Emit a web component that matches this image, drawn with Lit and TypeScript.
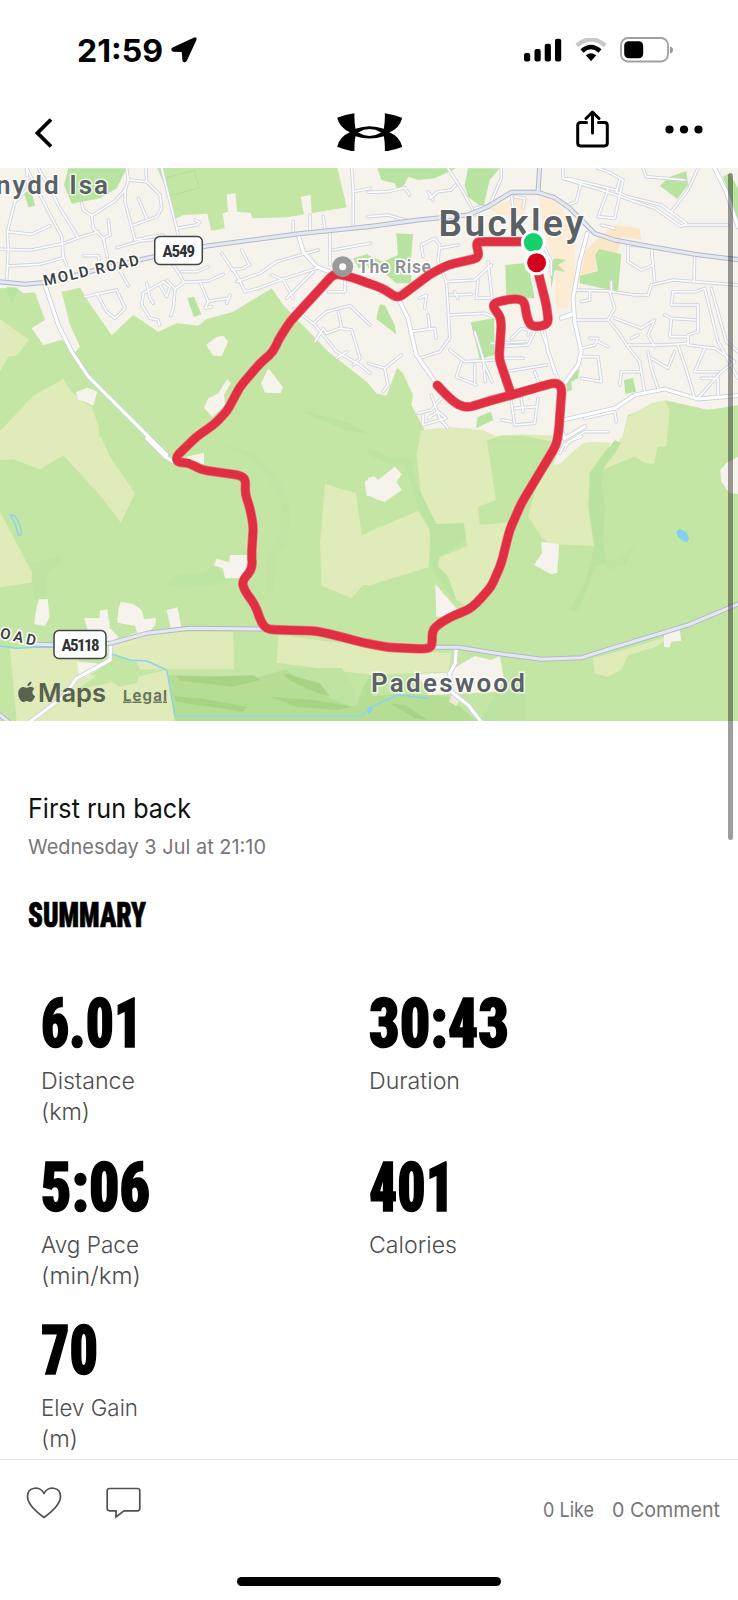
import { LitElement, html, svg, css } from "lit";
import { customElement } from "lit/decorators.js";

type Shape = [string, string];
type Tile = { x: number; y: number; areas: Shape[]; minor: string[]; mid: string[]; major: string[]; water: string[] };

const GREEN = "#c4e6a5";
const PARK = "#b9e3a0";
const FIELD = "#dfebb9";
const TOWN = "#f5f3ec";
const SHOP = "#fbe6c6";

// The map is drawn as four tiles, each in units of a third of a pixel.
const NW: Tile = {
  x: 0, y: 165,
  areas: [
    [TOWN, "0,0 1115,0 1115,662 985,560 850,420 815,370 700,440 620,462 595,482 530,475 475,500 400,450 335,511 300,460 265,410 240,368 185,380 210,480 240,545 225,562 185,525 130,540 95,490 135,465 105,382 70,385 50,368 0,370"],
    [GREEN, "468,0 1010,0 1040,127 860,157 757,160 752,143 712,140 706,85 680,88 684,140 668,145 674,190 634,197 622,146 550,150 525,162 505,90"],
    [TOWN, "902,95 932,90 935,150 912,150"],
    [PARK, "205,10 380,10 350,70 300,100 215,116 192,60"],
    [PARK, "68,75 95,80 105,122 86,127"],
    [PARK, "562,400 582,395 604,448 582,456"],
    [PARK, "20,366 52,368 48,395 38,412 25,395"],
    [PARK, "1060,280 1110,265 1110,300 1075,310"],
    [FIELD, "0,462 88,525 50,572 25,575 0,620"],
    [FIELD, "0,798 100,692 190,642 215,680 250,710 275,725 295,780 300,845 0,845"],
    [TOWN, "618,540 650,515 670,512 684,530 665,574 640,572"],
    [TOWN, "805,610 848,665 842,685 795,683 783,655"],
    [TOWN, "682,642 692,655 672,690 676,720 636,756 612,728 625,700 655,685"],
    [TOWN, "228,682 262,668 292,680 280,722 255,710 235,705"],
    ["#bce2a0", "915,738 1050,775 1110,810 1030,792 960,765"],
  ],
  minor: [
    "20,345 25,250 22,200 45,110 85,70 80,10", "22,200 95,208 150,182", "0,253 95,255 192,235 235,218 295,200", "25,303 120,298 190,278",
    "80,10 130,110 185,215 190,275 200,300", "115,10 150,70 180,130 235,218", "245,115 250,135 275,152 345,108 375,75 385,45 380,10",
    "275,152 280,190 310,220 325,290 350,300 385,362", "385,45 440,50 438,10", "440,50 480,90 485,130 470,155 395,182", "375,75 375,110 405,225 455,215 490,210",
    "415,100 440,160", "310,220 330,210 325,165", "350,248 420,228 480,222", "250,272 295,272 300,310", "485,10 530,190 535,215", "530,190 590,180 600,172 585,165", "520,300 540,330 552,352 625,348 670,328", "500,345 525,372 552,352", "525,372 520,430 512,452",
    "430,385 490,350 510,365 500,395 480,360", "430,385 425,420 450,460 475,465 478,480", "440,355 450,400 460,415", "600,350 625,410 615,430 635,425", "625,410 650,405 685,400 680,415 690,390",
    "545,320 590,320 625,305", "255,395 350,375 375,430 345,460 320,440 290,385", "665,265 695,310 710,330 735,380 775,370 850,342 950,310", "725,255 745,295", "695,315 730,310 750,298", "710,350 780,325 830,290 900,270 955,255",
    "880,205 880,170", "930,200 930,150", "975,195 970,155", "1060,185 1060,80 1055,10", "1060,80 1110,70", "1000,255 1110,235", "990,200 990,300", "880,400 850,345 815,330", "940,320 860,400", "985,380 1035,380 1035,340",
    "880,430 945,480 1010,560 1080,600 1110,625", "940,475 980,440 1050,422 1110,480", "980,505 1020,490 1055,495 1080,580 1060,600", "1025,490 1015,440", "980,505 970,490 945,530", "1040,560 1010,580",
  ],
  mid: ["135,360 175,480 215,560 265,635 470,840 500,870", "895,210 910,260 950,305 1000,325"],
  major: ["-5,350 75,358 140,352 300,312 440,280 620,243 890,207 1115,184"],
  water: [],
};

const NE: Tile = {
  x: 368, y: 165,
  areas: [
    [TOWN, "0,0 1115,0 1115,722 1020,735 895,707 780,750 760,830 0,830 0,655"],
    [GREEN, "0,655 25,685 55,692 88,608 105,625 135,690 130,720 170,795 160,845 0,845"],
    [FIELD, "160,795 250,787 345,795 380,812 460,808 555,812 580,845 150,845"],
    [GREEN, "345,830 400,812 470,812 555,830 555,845 345,845"],
    [TOWN, "585,760 770,700 755,845 585,845"],
    [FIELD, "760,830 780,755 850,715 890,706 905,735 895,845 740,845"],
    [GREEN, "890,706 1020,735 1115,720 1115,845 895,845 908,735"],
    [PARK, "28,10 265,10 200,40 150,45 120,35 110,58 90,78 80,55 40,45"],
    [PARK, "300,10 395,10 365,45 345,130 300,95 290,60"],
    [PARK, "955,18 960,60 928,102 875,62 905,35"],
    ["#fbecd3", "510,95 555,100 590,140 620,200 620,320 600,430 565,430 560,300 530,200"],
    ["#fbecd3", "365,130 450,95 480,100 470,150 390,150"],
    [SHOP, "650,260 690,220 740,180 815,190 820,225 760,215 740,300 640,330"],
    [PARK, "693,252 760,268 750,380 635,355 635,332 690,318 682,270"],
    [PARK, "412,300 480,293 500,400 415,398"],
    [PARK, "560,280 595,285 570,300 592,320 560,315 550,370 545,300"],
    [PARK, "85,205 135,208 130,270 130,355 85,355 50,325 0,310 0,270 45,290 90,270"],
    [PARK, "35,418 50,420 80,480 85,508 25,462"],
    [PARK, "308,472 378,460 380,570 335,582"],
    [PARK, "328,757 368,740 376,765 325,790"],
    [PARK, "768,645 795,638 804,680 772,687"],
    [PARK, "595,650 635,610 630,640 610,650 612,675 596,680"],
    [PARK, "1065,35 1110,170 1110,70 1085,25"],
  ],
  minor: [
    "0,82 60,80 110,68 125,90", "240,10 285,80 310,125 320,150", "185,100 210,80 250,75 262,60", "180,80 195,105", "320,130 365,120 400,40 400,10", "440,95 470,100 465,130", "430,85 435,130",
    "585,10 585,40 700,75 860,130 940,185 955,175 880,120 780,95 745,80 755,45", "600,40 745,75", "690,10 720,20 765,45 740,160 690,155 720,75", "825,10 835,35 950,45", "990,10 960,75 910,140", "950,180 1080,180", "640,50 625,110 600,120", "700,180 740,190",
    "165,275 160,240 200,220 215,240 210,290 235,350", "215,250 270,240", "235,350 240,420 245,520 215,560 155,580", "235,350 320,345 370,300", "245,390 310,388", "240,450 350,445 385,460", "270,400 260,380", "330,345 325,400 370,398", "360,290 372,400",
    "155,400 175,390 170,430", "125,500 200,490 205,520", "185,490 180,450", "320,500 345,580 352,650", "245,555 290,590 380,585", "320,600 320,655", "280,590 265,635 325,660", "350,600 372,650", "400,545 480,540 500,500 460,490 430,520",
    "370,535 470,530", "400,580 465,580", "425,618 535,600", "480,510 490,480", "520,495 555,600 570,640", "530,500 540,560 560,625", "500,620 515,660",
    "0,595 50,610 60,660 45,680", "50,610 100,570", "150,745 190,735 220,700", "165,750 165,780 235,760 210,740 180,760", "190,690 215,760 240,790", "430,710 440,780 500,775 510,700", "400,765 430,770", "440,730 505,725", "460,700 465,740",
    "620,375 720,378 800,390 840,390 850,360 915,345 980,350 1110,360", "780,290 780,240 850,245 855,300 820,315 780,290", "850,245 860,350", "980,270 978,350", "1035,275 1110,280", "640,410 665,405 665,375", "730,380 730,350",
    "620,465 720,465 740,430 725,380", "720,465 750,500 780,545 815,590", "740,460 820,490 860,465 840,510 860,545", "780,540 890,540 960,535", "640,550 680,540 690,520 665,520", "690,530 720,545", "790,520 810,510",
    "640,575 690,575 700,650 640,640", "915,380 910,420 950,420 990,420 990,500 960,510 960,540", "890,450 910,460 985,465", "910,465 905,515 960,515", "915,380 985,380 1010,370 1050,530 1110,640", "960,540 1040,550 1100,590 1060,620 990,700",
    "930,540 960,630 980,700", "1010,550 980,620 1050,620", "815,590 820,620 760,620 755,660", "820,620 830,680", "840,560 850,610 870,670", "920,560 900,610 850,580", "1030,370 1075,530 1110,560", "580,455 610,445", "590,840 650,800 720,800", "650,760 740,740 745,770", "1050,690 1050,640 1000,640",
    "0,155 60,150 130,170", "530,250 550,290 550,330",
  ],
  mid: [
    "90,398 120,460 145,570 205,655", "658,205 635,290 615,400 620,470 640,560 630,600 590,655", "585,765 740,730 800,690 890,672 990,702 1110,692", "1040,10 1075,80 1110,185", "610,450 580,460",
  ],
  major: ["-5,186 150,165 300,150 360,125 430,82 510,82 560,98 605,130 640,165 680,205 740,225 850,245 980,268 1115,285", "515,0 510,82"],
  water: [],
};

const SW: Tile = {
  x: 0, y: 440,
  areas: [
    [FIELD, "0,-10 303,-10 330,50 405,160 362,248 330,205 290,155 190,46 120,88 40,58 0,60"],
    [FIELD, "0,215 95,395 95,428 0,442"],
    [FIELD, "975,132 1068,160 1085,285 1115,275 1115,435 1090,435 1055,475 965,437 960,310"],
    ["#bfe4a4", "660,10 760,40 830,100 870,190 865,300 830,350 820,460 800,460 800,350 840,280 845,190 800,110 740,50"],
    ["#bee4a4", "495,430 530,405 600,400 640,378 700,420 640,435 560,445 510,440"],
    ["#bee4a4", "95,370 175,345 180,370 142,395 140,480 100,480"],
    [FIELD, "30,625 330,610 410,575 700,575 702,688 420,688 410,725 350,740 300,700 230,750 500,690 525,845 50,845"],
    [GREEN, "230,640 320,640 410,665 420,690 410,730 360,740 300,705 250,705"],
    [FIELD, "835,585 1115,620 1115,705 830,668"],
    ["#b5dd94", "505,705 780,710 850,690 1020,685 1060,750 1070,790 1090,740 1115,700 1115,845 525,845"],
    ["#bfe3a0", "850,685 1025,685 1060,740 1075,795 1050,800 980,770"],
    ["#a9d384", "530,708 640,710 760,705 780,720 700,740 540,722"],
    ["#a9d384", "520,768 600,775 740,800 730,815 530,785"],
    ["#a9d384", "850,700 960,730 990,770 950,758 870,722"],
    ["#a9d384", "810,770 940,780 1060,800 1010,810 890,800"],
    [TOWN, "117,478 143,478 149,530 135,558 103,552 108,510"],
    [TOWN, "252,534 298,534 300,512 322,508 330,565 355,590 330,620 265,575"],
    [TOWN, "362,485 400,492 425,510 432,538 468,534 466,555 448,575 412,580 405,558 352,548 355,510"],
    [TOWN, "500,510 533,502 543,560 512,564"],
    [TOWN, "690,345 745,345 745,415 675,415 668,385 641,376 650,356 688,367"],
    [TOWN, "232,665 290,670 300,685 260,710 235,700"],
    [TOWN, "560,50 612,38 612,72 580,75"],
    [TOWN, "1094,125 1115,110 1115,168 1100,168"],
  ],
  minor: [],
  mid: ["440,-5 495,50 525,68", "332,620 330,660 230,715 190,770 90,845"],
  major: ["90,612 160,614 330,610 440,580 570,565 800,567 830,570", "0,825 25,845"],
  water: ["0,618 50,625 100,622 160,622", "330,640 390,660 440,663 500,690 525,828 1085,828 1115,800", "30,225 45,250 55,285 65,285 60,255 45,228 30,225"],
};

const SE: Tile = {
  x: 368, y: 440,
  areas: [
    [FIELD, "160,-10 355,-10 384,180 330,200 335,255 425,247 415,330 360,450 300,500 265,480 240,410 210,380 215,352 297,318 288,250 205,252 160,170 145,40"],
    [FIELD, "0,277 150,213 187,270 182,382 0,437"],
    [FIELD, "560,60 640,10 740,-5 670,90 660,200 678,318 545,312 520,290 480,230 510,120"],
    [TOWN, "555,75 585,-5 740,-5 735,8 650,5 605,45 575,72"],
    [FIELD, "755,-5 875,-5 858,72 830,68 800,50 705,88 745,35"],
    ["#bce2a2", "740,0 760,10 710,75 700,130 712,200 705,300 715,370 680,380 660,440 630,510 605,510 650,430 680,320 662,200 665,100"],
    ["#bee3a3", "705,370 760,350 805,315 770,375 720,390"],
    ["#bce3a2", "0,20 60,50 130,60 140,120 205,252 285,250 295,300 210,350 210,380 240,410 265,480 240,460 190,380 185,270 150,200 130,130 110,75 60,70 0,45"],
    [TOWN, "80,80 102,103 85,125 102,150 50,186 25,178 0,165 0,115 18,108 30,120"],
    [TOWN, "520,305 573,312 568,398 550,403 498,375 522,340"],
    [TOWN, "202,432 268,508 235,530 205,530"],
    [TOWN, "1110,50 1075,70 1057,90 1060,125 1085,160 1115,162"],
    [FIELD, "0,625 250,640 240,695 0,705"],
    [FIELD, "675,655 800,620 930,580 860,622 780,645 760,690 720,710 680,700"],
    [TOWN, "888,580 935,570 940,602 910,605 905,622 888,622"],
    [TOWN, "265,680 320,648 370,660 395,648 408,715 390,755 180,765 150,702 240,698"],
    ["#b5dd94", "0,770 100,760 240,770 330,845 0,845"],
    ["#bde3a3", "380,760 470,740 475,845 340,845"],
    ["#a9d384", "65,790 110,795 180,840 140,835"],
    ["#f0ead8", "250,765 278,778 265,797 243,785"],
    ["#82d0f6", "925,275 935,267 955,275 963,295 958,307 945,303 930,290"],
    ["#82d0f6", "0,800 15,805 5,820 0,822"],
  ],
  minor: ["590,30 600,5 640,-10", "575,40 590,10"],
  mid: ["265,625 262,670 245,700 250,755 300,795 340,845", "580,-30 590,-5 650,-40"],
  major: ["200,622 270,622 400,642 520,658 640,653 740,622 960,555 1115,490"],
  water: ["0,805 90,765 180,775"],
};

const tiles = [NW, NE, SW, SE];

const locate = (t: Tile, points: string) =>
  points.split(" ").map((p) => {
    const [x, y] = p.split(",").map(Number);
    return [t.x + x / 3, t.y + y / 3];
  });

const place = (t: Tile, points: string) => locate(t, points).map(([x, y]) => `${x.toFixed(1)},${y.toFixed(1)}`).join(" ");

/** Path through the points with every corner eased over a few pixels. */
const eased = (pts: number[][], reach = 6) => {
  const toward = (a: number[], b: number[]) => {
    const d = Math.hypot(b[0] - a[0], b[1] - a[1]) || 1;
    const k = Math.min(reach, d / 2) / d;
    return `${(a[0] + (b[0] - a[0]) * k).toFixed(1)} ${(a[1] + (b[1] - a[1]) * k).toFixed(1)}`;
  };
  let d = `M${pts[0].join(" ")}`;
  for (let i = 1; i < pts.length - 1; i++) {
    d += `L${toward(pts[i], pts[i - 1])}Q${pts[i].join(" ")} ${toward(pts[i], pts[i + 1])}`;
  }
  return d + `L${pts[pts.length - 1].join(" ")}`;
};

const route = eased([
  ...locate(NE, "495,230 340,230 324,232 334,278 240,300 190,325 90,400 40,368"),
  ...locate(NW, "1105,355 1060,338 1003,325 870,470 835,525 820,560 780,595 720,665 680,740 640,780 590,815"),
  ...locate(SW, "528,50 533,68 565,68 605,90 720,106 737,118 735,160 750,205 760,260 755,340 757,385 726,425 733,450 765,495 785,550 800,566 820,569 950,573 1010,587 1090,608"),
  ...locate(SE, "60,622 165,627 192,622 193,570 215,550 260,525 300,510 325,490 370,440 400,370 425,270 460,190 520,90 565,15"),
  ...locate(NE, "572,800 582,668 565,652 520,664 430,690 350,712 300,728 270,720 240,695 208,661"),
]);
const spur = eased(locate(NE, "430,690 393,580 400,480 396,452 374,425 382,412 430,402 455,402 470,412 476,455 488,484 520,484 542,474 535,420 510,320"));

const tiled = (key: "minor" | "mid" | "major" | "water", cls: string) =>
  tiles.map((t) => t[key].map((p) => svg`<polyline class=${cls} points=${place(t, p)} />`));

/** Text set to an exact advance width, on a given baseline. */
const fit = (text: string, cls: string, width: number, height: number, baseline: number) => html`
  <svg class="line" width=${width} height=${height}>
    <text class=${cls} x="0" y=${baseline} textLength=${width} lengthAdjust="spacingAndGlyphs">${text}</text>
  </svg>`;

const label = (text: string, cls: string, x: number, y: number, width: number, turn = 0) => svg`
  <text class=${cls} x=${x} y=${y} textLength=${width} lengthAdjust="spacing"
    transform=${`rotate(${turn} ${x} ${y})`}>${text}</text>`;

@customElement("route-map")
export class RouteMap extends LitElement {
  static styles = css`
    :host { display: block; height: 553px; }
    svg { display: block; }
    text { font-family: Inter, "Liberation Sans", sans-serif; }
    polyline, .route, .route-edge { fill: none; stroke-linecap: round; stroke-linejoin: round; }
    .minor-edge { stroke: #d0d3dd; stroke-width: 3.4; }
    .minor-road { stroke: #fdfdfd; stroke-width: 1.7; }
    .mid-edge { stroke: #cbcfdb; stroke-width: 4.8; }
    .mid-road { stroke: #ffffff; stroke-width: 3.2; }
    .major-edge { stroke: #b3b8cb; stroke-width: 5; }
    .major-road { stroke: #e3e8f1; stroke-width: 3; }
    .water { stroke: #8bd3ec; stroke-width: 1.4; }
    .route-edge { stroke: #e8717d; stroke-width: 9.6; }
    .route { stroke: #e02f40; stroke-width: 8.2; }
    .town { fill: #5b6065; font-weight: 600; paint-order: stroke; stroke: rgba(255, 255, 255, 0.75); stroke-width: 3px; }
    .city { font-family: Roboto, sans-serif; font-size: 37px; font-weight: 600; }
    .village { font-family: Roboto, sans-serif; font-size: 26px; }
    .road { font-family: Roboto, sans-serif; fill: #3d3f42; font-size: 15px; font-weight: 600; paint-order: stroke; stroke: #fff; stroke-width: 3px; }
    .stop { font-family: Roboto, sans-serif; fill: #8c8f96; font-size: 17.5px; font-weight: 600; paint-order: stroke; stroke: #fff; stroke-width: 3px; }
    .shield { fill: #fff; stroke: #414344; stroke-width: 1.5; }
    .number { font-family: Roboto, sans-serif; font-stretch: 75%; font-size: 17px; font-weight: 700; fill: #303236; }
    .brand { fill: #596150; font-size: 25.5px; font-weight: 600; }
    .legal { fill: #6b7660; font-size: 15px; font-weight: 700; text-decoration: underline; text-underline-offset: 2px; }
  `;
  render() {
    return html`
      <svg width="738" height="553" viewBox="0 168 738 553">
        <rect x="0" y="168" width="738" height="553" fill="#c4e6a5" />
        ${tiles.map((t) => t.areas.map(([fill, p]) => svg`<polygon fill=${fill} points=${place(t, p)} />`))}
        <path d="M166 178l28-8 5 18-30 8z" fill="none" stroke="#b5dd98" stroke-width="1" />
        ${tiled("water", "water")}
        ${tiled("minor", "minor-edge")}${tiled("mid", "mid-edge")}
        ${tiled("minor", "minor-road")}${tiled("mid", "mid-road")}
        ${tiled("major", "major-edge")}${tiled("major", "major-road")}
        ${label("nydd Isa", "town village", -4, 193.5, 112)}
        ${label("MOLD ROAD", "road", 44.5, 286, 97.5, -12.5)}
        ${label("ROAD", "road", -13, 635, 49, 13)}
        ${label("The Rise", "stop", 358, 273.3, 73)}
        ${label("Padeswood", "town village", 371, 691.7, 154)}
        ${label("Buckley", "town city", 438.5, 236, 145)}
        <path class="route-edge" d=${route} /><path class="route-edge" d=${spur} />
        <path class="route" d=${route} /><path class="route" d=${spur} />
        <circle cx="342.7" cy="266.7" r="7" fill="#fff" stroke="#9a9a9b" stroke-width="7" />
        <circle cx="533.3" cy="242.5" r="11" fill="#16cf6d" stroke="#fff" stroke-width="3" />
        <circle cx="536.6" cy="262.8" r="11" fill="#d3021c" stroke="#fff" stroke-width="3" />
        <rect class="shield" x="154.7" y="236.5" width="47.6" height="28" rx="5" />
        ${label("A549", "number", 162.5, 256.6, 32.5)}
        <rect class="shield" x="54" y="630.5" width="52" height="28" rx="5" />
        ${label("A5118", "number", 61.5, 650.6, 38)}
        <path fill="#596150" d="M31.5 681.5c.2 2.200-1.800 4.500-4 4.600-.3-2.200 1.800-4.400 4-4.600zM34.300 689.100c-2.800 1.800-2.300 5.900.8 7.100-1 2.700-2.700 5.700-4.700 5.700-1.400 0-1.900-.8-3.600-.8s-2.200.8-3.600.8c-2.400 0-5-4.800-5-8.500 0-3.900 2.500-6.500 5.300-6.500 1.400 0 2.400.9 3.500.9 1 0 2.200-1 4-1 1.300 0 2.500.8 3.300 2.300z" />
        ${label("Maps", "brand", 38, 701.7, 68)}
        ${label("Legal", "legal", 123, 700.5, 44)}
      </svg>`;
  }
}

type Stat = { value: string; width: number; lines: [string, number][] };

const stats: Stat[] = [
  { value: "6.01", width: 101, lines: [["Distance", 94], ["(km)", 49]] },
  { value: "30:43", width: 140, lines: [["Duration", 91]] },
  { value: "5:06", width: 109, lines: [["Avg Pace", 98], ["(min/km)", 100]] },
  { value: "401", width: 85, lines: [["Calories", 88]] },
  { value: "70", width: 57, lines: [["Elev Gain", 97], ["(m)", 37]] },
];

@customElement("app-root")
export class AppRoot extends LitElement {
  static styles = css`
    :host {
      display: flex; flex-direction: column; position: relative;
      width: 738px; height: 1600px; overflow: hidden; background: #fff;
      font-family: Inter, "Liberation Sans", sans-serif;
    }
    svg { display: block; flex: none; }
    .line { overflow: visible; }
    .status { display: flex; align-items: center; height: 99px; padding: 0 64px 0 77px; box-sizing: border-box; }
    .time { font-size: 31px; font-weight: 700; fill: #000; }
    .arrow { margin-left: 8px; margin-top: 1px; }
    .indicators { display: flex; align-items: center; gap: 13px; margin-left: auto; }
    .header { display: flex; align-items: center; height: 69px; padding: 0 35px; box-sizing: border-box; }
    .back { margin-bottom: 2px; }
    .logo { margin: 0 0 3px 283.5px; }
    .share { margin: 0 0 10px auto; }
    .more { margin: 0 0 8px 56px; }
    .body { flex: 1; min-height: 0; overflow: hidden; padding: 72px 0 0 28px; }
    .title { font-size: 27px; font-weight: 400; fill: #111; }
    .date { font-size: 20.5px; fill: #777; }
    .heading { display: block; margin-top: 41px; }
    .summary { font-family: Roboto, sans-serif; font-stretch: 75%; font-size: 34.5px; font-weight: 900; fill: #000; stroke: #000; stroke-width: 0.7px; }
    .stats { display: grid; grid-template-columns: 328px 328px; grid-auto-rows: 163.7px; padding: 60px 0 0 13px; }
    .value { font-family: Roboto, sans-serif; font-stretch: 75%; font-size: 68px; font-weight: 900; fill: #000; stroke: #000; stroke-width: 1.6px; }
    .captions { padding-top: 12px; }
    .caption { font-size: 23px; font-weight: 350; fill: #4d4d4d; }
    .footer { display: flex; height: 86px; border-top: 1.5px solid #e5e5e5; padding: 0 18px 0 26px; align-items: center; box-sizing: border-box; }
    .comment { margin-left: 44px; }
    .counts { display: flex; gap: 18px; margin-left: auto; padding-top: 13px; }
    .count { font-size: 20.5px; fill: #777; }
    .home { height: 55px; display: flex; justify-content: center; align-items: flex-start; padding-top: 32px; box-sizing: border-box; }
    .bar { width: 264px; height: 9px; margin-right: 1px; border-radius: 5px; background: #000; }
    .scroll { position: absolute; right: 5px; top: 173px; width: 5.5px; height: 667px; border-radius: 3px; background: rgba(0, 0, 0, 0.38); }
  `;
  render() {
    return html`
      <div class="status">
        ${fit("21:59", "time", 86, 30, 26.5)}
        <svg class="arrow" width="26" height="26" viewBox="0 0 26 26">
          <path d="M23.5 1.2 2 11.2Q.2 12.9 2.2 13.9L11.5 14.3 12.2 23.3Q13.3 25.6 15 23.6L24.7 2.7Q25.2.8 23.5 1.2Z" stroke="#000" stroke-width="1.6" stroke-linejoin="round" />
        </svg>
        <div class="indicators">
          <svg width="38" height="24" viewBox="0 0 38 24">
            <rect x="0" y="15" width="6.2" height="8.5" rx="2" /><rect x="10.5" y="11" width="6.2" height="12.5" rx="2" />
            <rect x="20.700" y="5.8" width="6.2" height="17.7" rx="2" /><rect x="31" y=".8" width="6.2" height="22.7" rx="2" />
          </svg>
          <svg width="32" height="24" viewBox="0 0 32 24" fill="none">
            <path d="M1.800 7.5Q16-4.5 30.2 7.5" stroke="#c9c9c9" stroke-width="4.5" />
            <path d="M7 13Q16 5 25 13" stroke="#000" stroke-width="4.5" />
            <path d="M10.8 17.3Q16 13.300 21.2 17.3L16 23.3Z" fill="#000" />
          </svg>
          <svg width="54" height="26" viewBox="0 0 54 26">
            <rect x="1" y="1" width="47" height="23.5" rx="7" fill="#fff" stroke="#a0a0a0" stroke-width="1.8" />
            <rect x="4.2" y="4.3" width="19" height="17" rx="4.5" />
            <path d="M50 9.500q3 .7 3 3.5t-3 3.5z" fill="#999" />
          </svg>
        </div>
      </div>
      <div class="header">
        <svg class="back" width="18" height="30" viewBox="0 0 18 30"><path d="M16 1.5 2.5 15 16 28.5" fill="none" stroke="#000" stroke-width="3.8" /></svg>
        <svg class="logo" width="65.3" height="38.7" viewBox="49.5 277.5 196 116">
          <path fill-rule="evenodd" d="M50 292Q74 282 102 278Q101 305 105 325Q147 310 190 325Q194 305 193 278Q220 282 245 292Q238 322 207 335.5Q238 349 245 379Q220 389 193 393Q194 366 190 347Q147 361 105 347Q101 366 102 393Q74 389 50 379Q57 349 88 335.5Q57 322 50 292ZM113 336Q147 315 182 336Q147 357 113 336Z" />
        </svg>
        <svg class="share" width="33" height="38" viewBox="0 0 33 38" fill="none" stroke="#000" stroke-width="3">
          <path d="M10.5 12.5H4.5Q1.700 12.5 1.7 15.3V33Q1.7 35.9 4.5 35.9H28.5Q31.3 35.9 31.3 33V15.3Q31.3 12.5 28.5 12.5H22.5M16.5 23V3" stroke-linecap="round" />
          <path d="M10 8.5 16.5 2 23 8.5" stroke-linecap="round" stroke-linejoin="round" />
        </svg>
        <svg class="more" width="38" height="9" viewBox="0 0 38 9"><circle cx="4.5" cy="4.5" r="4.100" /><circle cx="19" cy="4.5" r="4.1" /><circle cx="33.5" cy="4.5" r="4.1" /></svg>
      </div>
      <route-map></route-map>
      <div class="body">
        ${fit("First run back", "title", 163, 36, 25)}
        ${fit("Wednesday 3 Jul at 21:10", "date", 238, 30, 25)}
        <div class="heading">${fit("SUMMARY", "summary", 118, 28, 26.5)}</div>
        <div class="stats">
          ${stats.map((s) => html`
            <div>
              ${fit(s.value, "value", s.width, 64, 59)}
              <div class="captions">${s.lines.map(([text, w]) => fit(text, "caption", w, 31, 25))}</div>
            </div>`)}
        </div>
      </div>
      <div class="footer">
        <svg class="heart" width="36" height="32" viewBox="0 0 36 32"><path d="M18 30.5Q1.5 18.5 1.5 9.5C1.5-.5 14.5-1.5 18 6.5 21.5-1.5 34.5-.5 34.5 9.5Q34.5 18.5 18 30.5Z" fill="none" stroke="#505050" stroke-width="1.7" stroke-linejoin="round" /></svg>
        <svg class="comment" width="35" height="32" viewBox="0 0 35 32"><path d="M3.5 1.5H31.5Q33.8 1.5 33.8 3.8V21.5Q33.8 23.8 31.5 23.8H18L10 30V23.8H3.5Q1.2 23.8 1.2 21.5V3.8Q1.2 1.5 3.5 1.5Z" fill="none" stroke="#505050" stroke-width="1.7" /></svg>
        <div class="counts">${fit("0 Like", "count", 51, 24, 20)}${fit("0 Comment", "count", 108, 24, 20)}</div>
      </div>
      <div class="home"><div class="bar"></div></div>
      <div class="scroll"></div>`;
  }
}
